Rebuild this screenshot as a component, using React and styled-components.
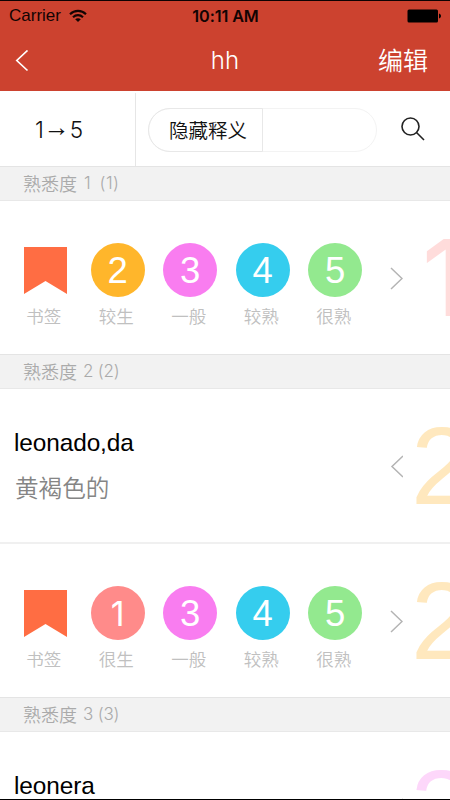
import React from 'react';
import styled, { createGlobalStyle } from 'styled-components';

const GlobalStyle = createGlobalStyle`
  * {
    box-sizing: border-box;
  }
  body {
    margin: 0;
    background: #fff;
    font-family: 'Liberation Sans', 'Noto Sans CJK SC', sans-serif;
  }
`;

const Screen = styled.div`
  width: 450px;
  height: 800px;
  display: flex;
  flex-direction: column;
  overflow: hidden;
  background: #fff;
  border-top: 1px solid #0d0202;
  border-bottom: 1px solid #000;
`;

const TopArea = styled.header`
  flex: none;
  height: 90px;
  background: #cc422f;
`;

const StatusBar = styled.div`
  height: 30px;
  padding: 0 8px 0 9px;
  display: grid;
  grid-template-columns: 1fr auto 1fr;
  align-items: center;
  color: #120403;
`;

const Carrier = styled.div`
  display: flex;
  align-items: center;
  gap: 8px;
  font-size: 17px;
`;

const Time = styled.div`
  font-family: Inter, sans-serif;
  font-size: 16.2px;
  font-weight: 600;
  letter-spacing: -0.1px;
`;

const Battery = styled.svg`
  justify-self: end;
`;

const NavBar = styled.div`
  height: 59px;
  padding: 0 22px 0 15px;
  display: grid;
  grid-template-columns: 1fr auto 1fr;
  align-items: center;
  color: #fff;
`;

const Title = styled.h1`
  margin: 0;
  padding-left: 7px;
  font-family: Inter, sans-serif;
  font-size: 24px;
  font-weight: 300;
`;

const EditButton = styled.button`
  justify-self: end;
  margin-top: -4px;
  padding: 0;
  border: none;
  background: none;
  color: #fff;
  font: 350 25px 'Noto Sans CJK SC', sans-serif;
`;

const Toolbar = styled.div`
  flex: none;
  height: 75px;
  display: flex;
  align-items: center;
`;

const SortOrder = styled.div`
  width: 136px;
  height: 73px;
  margin-top: 2px;
  padding: 0 0 0 35px;
  display: flex;
  align-items: center;
  border-right: 1px solid #e6e6e6;
  font-family: Inter, sans-serif;
  font-size: 22.5px;
  font-weight: 300;
  color: #111;
`;

const SortArrow = styled.span`
  padding-bottom: 5px;
  font-family: 'Liberation Sans', sans-serif;
  font-size: 26px;
  line-height: 26px;
`;

const Pill = styled.div`
  width: 229px;
  height: 44px;
  margin: 3px 0 0 12px;
  border: 1px solid #f3f3f3;
  border-radius: 22px;
  display: flex;
`;

const PillHalf = styled.div`
  width: 115px;
  height: 44px;
  margin: -1px 0 0 -1px;
  border: 1px solid #e8e8e8;
  border-radius: 22px 0 0 22px;
  padding: 0 0 2px 20px;
  display: flex;
  align-items: center;
  font: 350 19.5px 'Noto Sans CJK SC', sans-serif;
  color: #111;
`;

const SearchIcon = styled.svg`
  margin: 0 0 0 24px;
`;

const SectionHeader = styled.div`
  flex: none;
  height: 35px;
  padding: 0 0 2px 23px;
  display: flex;
  align-items: center;
  background: #f2f2f2;
  border-top: 1px solid #e4e4e4;
  border-bottom: 1px solid #e8e8e8;
  font: 350 18px 'Noto Sans CJK SC', sans-serif;
  color: #aaa;
`;

const HeaderCount = styled.span`
  margin-left: ${(p) => (p.$level === 1 ? 7 : 6)}px;
  font-family: Inter, sans-serif;
  font-size: 17px;
  font-weight: 350;
  word-spacing: ${(p) => (p.$level === 1 ? 3 : 0)}px;
  letter-spacing: ${(p) => (p.$level === 1 ? 0.5 : -0.2)}px;
`;

const Row = styled.div`
  flex: none;
  height: ${(p) => (p.$divided ? 155 : 153)}px;
  display: flex;
  align-items: flex-start;
  overflow: hidden;
  border-bottom: ${(p) => (p.$divided ? '2px solid #f0f0f0' : 'none')};
`;

const RowMain = styled.div`
  flex: none;
  width: 381px;
  padding-left: ${(p) => (p.$word ? 14 : 9)}px;
`;

const Choices = styled.div`
  display: grid;
  grid-template-columns: repeat(5, 72.5px);
  padding-top: 42px;
`;

const Choice = styled.div`
  display: flex;
  flex-direction: column;
  align-items: center;
`;

const Ball = styled.div`
  width: 54px;
  height: 54px;
  padding-top: ${(p) => (p.$level === 1 ? 0 : 2)}px;
  border-radius: 50%;
  display: flex;
  align-items: center;
  justify-content: center;
  background: ${(p) => p.$color};
  color: #fff;
  font-family: ${(p) => (p.$level === 1 ? 'Inter' : "'Liberation Sans'")}, sans-serif;
  font-size: ${(p) => (p.$level === 1 ? 34 : 36.5)}px;
  font-weight: 400;
`;

const Bookmark = styled.svg`
  margin: 4px 0 3px;
`;

const Caption = styled.span`
  margin: 6px 3px 0 0;
  font: 350 17.5px/26px 'Noto Sans CJK SC', sans-serif;
  color: #c0c0c0;
`;

const Word = styled.div`
  padding-top: 40px;
  font-size: 24.4px;
  letter-spacing: -0.1px;
  line-height: 28px;
  color: #000;
`;

const Meaning = styled.div`
  margin-top: 13px;
  padding-left: 1px;
  font: 350 23.6px/34px 'Noto Sans CJK SC', sans-serif;
  color: #858585;
`;

const Chevron = styled.svg`
  flex: none;
  margin: 65px 0 0 8px;
`;

const BigLevel = styled.div`
  flex: none;
  margin: ${(p) => (p.$level === 1 ? '21px 0 0 19px' : '21px 0 0 8px')};
  font-family: ${(p) => (p.$level === 1 ? 'Inter' : "'Liberation Sans'")}, sans-serif;
  font-size: ${(p) => (p.$level === 1 ? 106 : 110)}px;
  font-weight: ${(p) => (p.$level === 1 ? 500 : 400)};
  line-height: 112px;
  color: ${(p) => p.$color};
`;

const levels = {
  1: { color: '#ff8b8a', faded: '#ffdcdb', name: '很生' },
  2: { color: '#ffb62b', faded: '#ffe8be', name: '较生' },
  3: { color: '#f97df0', faded: '#fdd7fa', name: '一般' },
  4: { color: '#35cdee', name: '较熟' },
  5: { color: '#93e98f', name: '很熟' },
};

function Arrow({ back }) {
  return (
    <Chevron width="14" height="24" viewBox="0 0 14 24" fill="none" stroke="#b4b4b4" strokeWidth="1.5">
      <path d={back ? 'M14 2 3 12.5 14 23' : 'M2 2 13 12.5 2 23'} />
    </Chevron>
  );
}

function Level({ value }) {
  return (
    <BigLevel $level={value} $color={levels[value].faded}>
      {value}
    </BigLevel>
  );
}

function Section({ level }) {
  return (
    <SectionHeader>
      熟悉度<HeaderCount $level={level}>{`${level} (${level})`}</HeaderCount>
    </SectionHeader>
  );
}

// a row slid open, offering every familiarity except its own
function ChoiceRow({ level }) {
  return (
    <Row>
      <RowMain>
        <Choices>
          <Choice>
            <Bookmark width="43" height="47" viewBox="0 0 43 47">
              <path d="M0 0h43v47L21.5 34 0 47z" fill="#ff6d43" />
            </Bookmark>
            <Caption>书签</Caption>
          </Choice>
          {[1, 2, 3, 4, 5]
            .filter((n) => n !== level)
            .map((n) => (
              <Choice key={n}>
                <Ball $level={n} $color={levels[n].color}>{n}</Ball>
                <Caption>{levels[n].name}</Caption>
              </Choice>
            ))}
        </Choices>
      </RowMain>
      <Arrow />
      <Level value={level} />
    </Row>
  );
}

function WordRow({ word, meaning, level }) {
  return (
    <Row $divided>
      <RowMain $word>
        <Word>{word}</Word>
        {meaning && <Meaning>{meaning}</Meaning>}
      </RowMain>
      <Arrow back />
      <Level value={level} />
    </Row>
  );
}

export default function App() {
  return (
    <>
      <GlobalStyle />
      <Screen>
        <TopArea>
          <StatusBar>
            <Carrier>
              Carrier
              <svg width="18" height="14" viewBox="0 0 18 14" fill="none" stroke="#120403" strokeWidth="2.1">
                <path d="M1 5.2C5.5.7 12.5.7 17 5.2" />
                <path d="M4 8.2c2.9-2.8 7.1-2.8 10 0" />
                <path d="M9 13 6.2 10.3c1.6-1.4 4-1.4 5.6 0z" fill="#120403" stroke="none" />
              </svg>
            </Carrier>
            <Time>10:11 AM</Time>
            <Battery width="35" height="14" viewBox="0 0 35 14">
              <rect x="0.5" y="0.5" width="30.5" height="13" rx="1.5" fill="#000" />
              <path d="M32 4.5c2.7.7 2.7 4.3 0 5z" fill="#000" />
            </Battery>
          </StatusBar>
          <NavBar>
            <svg width="14" height="22" viewBox="0 0 14 22" fill="none" stroke="#fff" strokeWidth="1.7">
              <path d="M12.5 0.5 1.8 10.5l10.7 10" />
            </svg>
            <Title>hh</Title>
            <EditButton>编辑</EditButton>
          </NavBar>
        </TopArea>
        <Toolbar>
          <SortOrder>
            1<SortArrow>→</SortArrow>5
          </SortOrder>
          <Pill>
            <PillHalf>隐藏释义</PillHalf>
          </Pill>
          <SearchIcon width="24" height="24" viewBox="0 0 24 24" fill="none" stroke="#222" strokeWidth="1.6">
            <circle cx="9.5" cy="9.5" r="8.5" />
            <path d="M15.5 15.5 23 23" />
          </SearchIcon>
        </Toolbar>
        <Section level={1} />
        <ChoiceRow level={1} />
        <Section level={2} />
        <WordRow word="leonado,da" meaning="黄褐色的" level={2} />
        <ChoiceRow level={2} />
        <Section level={3} />
        <WordRow word="leonera" level={3} />
      </Screen>
    </>
  );
}
